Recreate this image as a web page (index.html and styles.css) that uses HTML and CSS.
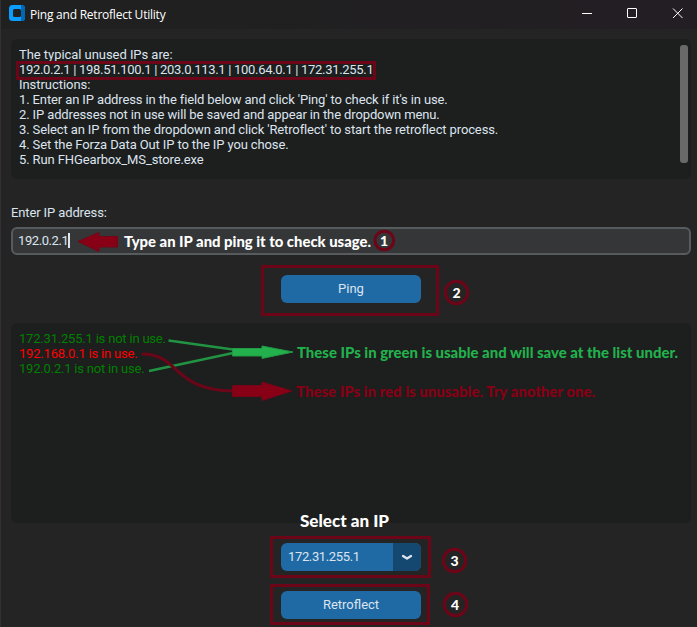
FILE: index.html
```html
<!DOCTYPE html>
<html lang="en">
<head>
<meta charset="utf-8">
<title>Ping and Retroflect Utility</title>
<link rel="stylesheet" href="styles.css">
</head>
<body>
<div class="window">
  <header class="titlebar">
    <svg class="logo" width="16" height="16" viewBox="0 0 16 16">
      <rect width="16" height="16" rx="3.500" fill="#0a9cff"/>
      <path d="M12 0h.5a3.500 3.500 0 0 1 3.500 3.500v9a3.500 3.500 0 0 1-3.500 3.500H12z" fill="#0068b4"/>
      <rect x="4" y="4" width="8" height="8" rx="1.500" fill="#202020"/>
    </svg>
    <h1 class="title">Ping and Retroflect Utility</h1>
    <svg class="controls" width="115" height="29" viewBox="0 0 115 29" fill="none" stroke="#fff">
      <path d="M0 13.500h10"/>
      <rect x="45.500" y="8.500" width="9" height="9" rx=".5"/>
      <path d="M91 8.500l9.500 9.500M100.500 8.500L91 18"/>
    </svg>
  </header>
  <main class="content">
    <section class="panel info">
      <div class="lines">
        <p class="intro">The typical unused IPs are:</p>
        <p class="addresses">192.0.2.1 | 198.51.100.1 | 203.0.113.1 | 100.64.0.1 | 172.31.255.1</p>
        <p class="intro">Instructions:</p>
        <p>1. Enter an IP address in the field below and click 'Ping' to check if it's in use.</p>
        <p>2. IP addresses not in use will be saved and appear in the dropdown menu.</p>
        <p>3. Select an IP from the dropdown and click 'Retroflect' to start the retroflect process.</p>
        <p>4. Set the Forza Data Out IP to the IP you chose.</p>
        <p>5. Run FHGearbox_MS_store.exe</p>
      </div>
      <div class="scrollbar"></div>
    </section>
    <label class="label">Enter IP address:</label>
    <div class="entry"><span>192.0.2.1</span><i class="caret"></i></div>
    <button class="button ping">Ping</button>
    <section class="panel results">
      <p class="free">172.31.255.1 is not in use.</p>
      <p class="used">192.168.0.1 is in use.</p>
      <p class="free">192.0.2.1 is not in use.</p>
    </section>
    <div class="select">
      <span class="value">172.31.255.1</span>
      <span class="arrow"><svg width="12" height="8" viewBox="0 0 12 8" fill="none" stroke="#dce4ee" stroke-width="2.300" stroke-linecap="round" stroke-linejoin="round"><path d="M2 3L6 5.500L10 3"/></svg></span>
    </div>
    <button class="button retro">Retroflect</button>
  </main>
  <svg class="notes" width="697" height="627" viewBox="0 0 697 627">
    <g class="frames">
      <rect x="17.500" y="62.500" width="357" height="16"/>
      <rect x="262.500" y="266.500" width="175" height="48"/>
      <rect x="271.500" y="537.500" width="158" height="39"/>
      <rect x="271.500" y="585.500" width="157" height="38"/>
      <circle cx="384.300" cy="240.500" r="9.300"/>
      <circle cx="456.500" cy="292.500" r="11.200"/>
      <circle cx="454.500" cy="560.500" r="11.200"/>
      <circle cx="455.500" cy="604.500" r="11.200"/>
    </g>
    <path class="red-arrow" d="M78 241.500L99 232.500v4h18.500v10.500H99v4.500z"/>
    <g class="green-line"><path d="M168.500 340.500L233 349.500"/><path d="M149 371L233 353"/></g>
    <path class="green-arrow" d="M232.500 348.500H262V346L293 352L262 358.500V356H232.500z"/>
    <path class="red-line" d="M142 354C181 354 171 390 233 391"/>
    <path class="red-arrow" d="M232.500 385.500H262V382L292 391L262 400.500V396.500H232.500z"/>
    <g class="words">
      <text x="124" y="246.500" textLength="247" lengthAdjust="spacingAndGlyphs">Type an IP and ping it to check usage.</text>
      <text class="green" x="297" y="357.500" textLength="381" lengthAdjust="spacingAndGlyphs">These IPs in green is usable and will save at the list under.</text>
      <text class="red" x="296" y="396.500" textLength="299" lengthAdjust="spacingAndGlyphs">These IPs in red is unusable. Try another one.</text>
      <text class="heading" x="300" y="527" textLength="89" lengthAdjust="spacingAndGlyphs">Select an IP</text>
    </g>
    <g class="digits">
      <text x="384" y="245.500">1</text>
      <text x="456.500" y="297.500">2</text>
      <text x="454.500" y="565.500">3</text>
      <text x="455" y="609.500">4</text>
    </g>
  </svg>
</div>
</body>
</html>
```
FILE: styles.css
```css
* { box-sizing: border-box; }
body { margin: 0; background: #242424; }
p, h1 { margin: 0; }
.window {
  position: relative;
  width: 697px;
  height: 627px;
  overflow: hidden;
  background: #242424;
  border-left: 1px solid #303036;
  color: #dce4ee;
  font: 13px/15px Roboto, sans-serif;
  letter-spacing: -0.12px;
}
.titlebar {
  display: flex;
  align-items: center;
  height: 29px;
  padding-left: 8px;
  background: linear-gradient(90deg, #202020 30%, #231e24);
}
.logo { margin-bottom: 3px; }
.title {
  margin-left: 5px;
  color: #fff;
  font: 12px/16px "Open Sans", sans-serif;
  letter-spacing: -0.23px;
}
.controls { margin-left: auto; }
.content {
  display: flex;
  flex-direction: column;
  padding: 10px 6px 0 10px;
}
.panel {
  width: 680px;
  border-radius: 6px;
  background: #1d1e1e;
}
.info {
  display: flex;
  justify-content: space-between;
  height: 140px;
  padding: 8px 3px 0 8px;
  white-space: nowrap;
}
.intro { letter-spacing: -0.05px; }
.addresses { letter-spacing: -0.31px; }
.scrollbar {
  width: 8px;
  height: 118px;
  margin-top: -2px;
  border-radius: 3px;
  background: #696969;
}
.label { margin-top: 26px; }
.entry {
  display: flex;
  align-items: center;
  width: 680px;
  height: 28px;
  margin-top: 7px;
  padding: 0 5px 1px;
  border: 2px solid #565b5e;
  border-radius: 6px;
  background: #343638;
  letter-spacing: -0.42px;
}
.caret { width: 2px; height: 15px; background: #dce4ee; }
.button {
  align-self: flex-start;
  width: 140px;
  height: 28px;
  margin-left: 270px;
  padding: 0 0 2px;
  border: 0;
  border-radius: 6px;
  background: #1f6aa5;
  color: #dce4ee;
  font: inherit;
  letter-spacing: 0;
}
.ping { margin-top: 20px; }
.results {
  height: 200px;
  margin-top: 20px;
  padding: 8px;
  letter-spacing: -0.2px;
}
.free { color: #008000; }
.used { color: #f00; }
.select {
  display: flex;
  width: 140px;
  height: 28px;
  margin: 20px 0 20px 270px;
  border-radius: 6px;
  overflow: hidden;
  background: #1f6aa5;
  letter-spacing: -0.36px;
}
.value { width: 112px; padding: 6px 7px; }
.arrow {
  display: flex;
  align-items: center;
  justify-content: center;
  width: 28px;
  background: #144870;
}
.notes {
  position: absolute;
  top: 0;
  left: -1px;
  letter-spacing: 0;
}
.frames { fill: none; stroke: #6d0519; stroke-width: 3; }
.red-arrow { fill: #880015; stroke: #760417; }
.green-arrow { fill: #22b14c; stroke: #219a45; }
.green-line { fill: none; stroke: #219343; stroke-width: 2.5; }
.red-line { fill: none; stroke: #6d0519; stroke-width: 3; }
.words {
  fill: #fff;
  font: 900 14.5px Lato, sans-serif;
}
.words .green { fill: #22b14c; }
.words .red { fill: #880015; }
.words .heading { font-size: 17px; }
.digits {
  fill: #fff;
  font: 900 14px Lato, sans-serif;
  text-anchor: middle;
}
```
